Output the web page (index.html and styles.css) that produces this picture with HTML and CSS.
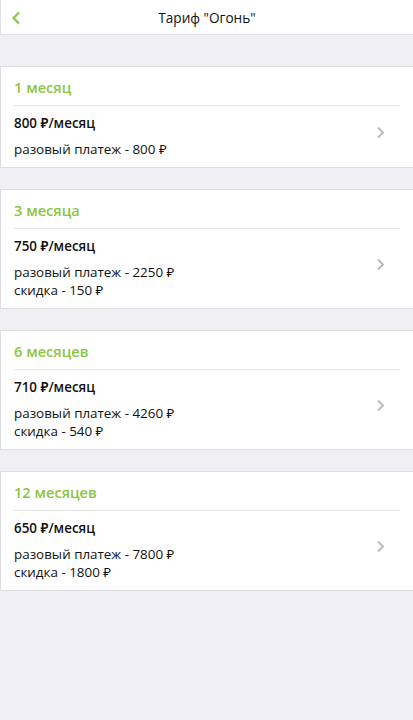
FILE: index.html
```html
<!DOCTYPE html>
<html lang="ru">
<head>
<meta charset="utf-8">
<link rel="stylesheet" href="styles.css">
</head>
<body>
<header class="topbar">
  <svg class="back" width="10" height="14" viewBox="0 0 10 14"><path d="M8 1.5 L2.5 7 L8 12.5" fill="none" stroke="#8cc63e" stroke-width="2.2"/></svg>
  <div class="title">Тариф "Огонь"</div>
</header>
<main class="list">
  <section class="card">
    <h2 class="card-title">1 месяц</h2>
    <div class="card-body">
      <div class="info">
        <div class="price">800 ₽/месяц</div>
        <div class="details"><div>разовый платеж - 800 ₽</div></div>
      </div>
      <svg class="chev" width="9" height="13" viewBox="0 0 9 13"><path d="M2 1.5 L7 6.5 L2 11.5" fill="none" stroke="#b7b7b7" stroke-width="1.8"/></svg>
    </div>
  </section>
  <section class="card">
    <h2 class="card-title">3 месяца</h2>
    <div class="card-body">
      <div class="info">
        <div class="price">750 ₽/месяц</div>
        <div class="details"><div>разовый платеж - 2250 ₽</div><div>скидка - 150 ₽</div></div>
      </div>
      <svg class="chev" width="9" height="13" viewBox="0 0 9 13"><path d="M2 1.5 L7 6.5 L2 11.5" fill="none" stroke="#b7b7b7" stroke-width="1.8"/></svg>
    </div>
  </section>
  <section class="card">
    <h2 class="card-title">6 месяцев</h2>
    <div class="card-body">
      <div class="info">
        <div class="price">710 ₽/месяц</div>
        <div class="details"><div>разовый платеж - 4260 ₽</div><div>скидка - 540 ₽</div></div>
      </div>
      <svg class="chev" width="9" height="13" viewBox="0 0 9 13"><path d="M2 1.5 L7 6.5 L2 11.5" fill="none" stroke="#b7b7b7" stroke-width="1.8"/></svg>
    </div>
  </section>
  <section class="card">
    <h2 class="card-title">12 месяцев</h2>
    <div class="card-body">
      <div class="info">
        <div class="price">650 ₽/месяц</div>
        <div class="details"><div>разовый платеж - 7800 ₽</div><div>скидка - 1800 ₽</div></div>
      </div>
      <svg class="chev" width="9" height="13" viewBox="0 0 9 13"><path d="M2 1.5 L7 6.5 L2 11.5" fill="none" stroke="#b7b7b7" stroke-width="1.8"/></svg>
    </div>
  </section>
</main>
</body>
</html>
```
FILE: styles.css
```css
* { box-sizing: border-box; }
html, body { margin: 0; padding: 0; }
body {
  background: #efeff4;
  font-family: "Open Sans", "Noto Sans", sans-serif;
  color: #111;
  font-size: 13.4px;
  min-height: 720px;
}
.topbar {
  height: 35px;
  background: #fff;
  border-bottom: 1px solid #e2e2e6;
  border-left: 1px solid #e2e2e6;
  display: flex;
  align-items: center;
  justify-content: center;
  position: relative;
}
.back { position: absolute; left: 10px; top: 11px; }
.title { font-size: 13.6px; color: #111; }
.list {
  padding-top: 31px;
  display: flex;
  flex-direction: column;
  gap: 21px;
}
.card {
  background: #fff;
  border-top: 1px solid #dedee2;
  border-bottom: 1px solid #dedee2;
  border-left: 1px solid #dedee2;
  padding: 0 13px;
}
.card-title {
  margin: 0;
  font-size: 14.6px;
  font-weight: 600;
  color: #8cc63e;
  height: 39px;
  line-height: 41px;
  border-bottom: 1px solid #e4e4e4;
}
.card-body {
  display: flex;
  align-items: center;
  justify-content: space-between;
  padding: 8px 15px 9px 0;
}
.chev { margin-bottom: 8px; }
.price { font-weight: 600; line-height: 18px; }
.details { margin-top: 8px; line-height: 18px; }
```
